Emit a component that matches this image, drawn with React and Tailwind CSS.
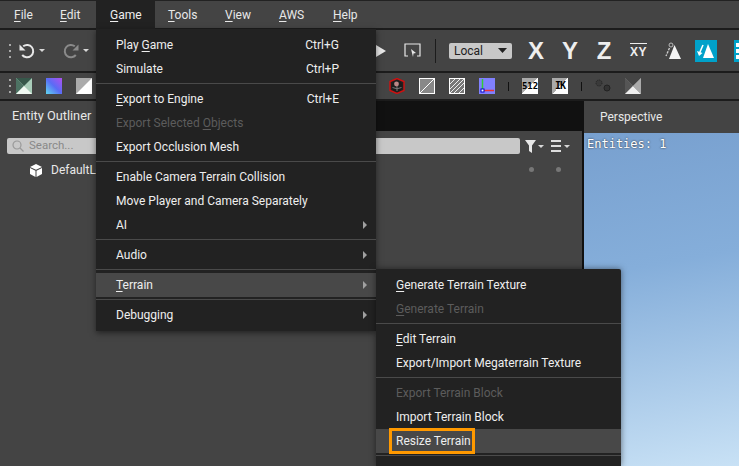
import React from "react";

const font = { fontFamily: 'Roboto, "Open Sans", sans-serif' };

function U({ children }) {
  return <span className="underline decoration-1 underline-offset-2">{children}</span>;
}

function Sep() {
  return <div className="h-px bg-[#4a4a4a] mt-[2px] mb-[3px]" />;
}

function Chevron() {
  return <svg width="4" height="8" viewBox="0 0 4 8" className="absolute right-[9px] top-[8px]"><path d="M0 0 L4 4 L0 8 Z" fill="#a0a0a0" /></svg>;
}

function Item({ children, shortcut, arrow, disabled, active, outlined }) {
  return (
    <div className={`relative h-6 flex items-center pl-5 pr-[37px] justify-between whitespace-nowrap text-[12px] ${active ? "bg-[#484848]" : ""} ${disabled ? "text-[#5c5c5c]" : "text-[#eeeeee]"}`}>
      <span>{children}</span>
      {shortcut && <span className="text-[12px]">{shortcut}</span>}
      {arrow && <Chevron />}
      {outlined && <div className="absolute left-[13px] top-[-1px] w-[86px] h-[26px] border-[3px] border-[#f90]" />}
    </div>
  );
}

function Caret({ className = "" }) {
  return <svg width="6" height="3" viewBox="0 0 6 3" className={className}><path d="M0 0 H6 L3 3 Z" fill="#d8d8d8" /></svg>;
}

function Grip() {
  return <div className="flex flex-col gap-[4px] w-[2px]"><i className="w-[2px] h-[2px] bg-[#aaa]" /><i className="w-[2px] h-[2px] bg-[#aaa]" /><i className="w-[2px] h-[2px] bg-[#aaa]" /></div>;
}

function Undo({ color, flip }) {
  return (
    <svg width="18" height="16" viewBox="0 0 18 16" fill="none" style={flip ? { transform: "scaleX(-1)" } : undefined}>
      <path d="M5.2 3.2 A6.2 6.2 0 1 1 4.2 12" stroke={color} strokeWidth="2" />
      <path d="M1.5 1.5 V7.5 H7.5 Z" fill={color} />
    </svg>
  );
}

function Icon16({ children, className = "" }) {
  return <svg width="16" height="16" viewBox="0 0 16 16" className={`shrink-0 ${className}`}>{children}</svg>;
}

export default function App() {
  return (
    <div style={font} className="relative w-[739px] h-[466px] overflow-hidden bg-[#444444] flex flex-col">
      {/* Menu bar */}
      <div className="h-[30px] shrink-0 border-t border-[#222] border-b-2 border-b-[#1c1c1c] bg-[#444444] flex items-center text-[12px] text-[#e8e8e8] pl-[14px] whitespace-nowrap">
        <span className="w-[46px]"><U>F</U>ile</span>
        <span className="w-[36px]"><U>E</U>dit</span>
        <span className="w-[59px] h-[29px] pl-[14px] pt-[1px] flex items-center bg-[#222222] text-[#eee]"><span><U>G</U>ame</span></span>
        <span className="w-[57px] ml-[13px]"><U>T</U>ools</span>
        <span className="w-[54px]"><U>V</U>iew</span>
        <span className="w-[54px]"><U>A</U>WS</span>
        <span><U>H</U>elp</span>
      </div>

      {/* Toolbar 1 */}
      <div className="h-[43px] shrink-0 border-b-2 border-b-[#1c1c1c] flex items-center *:shrink-0">
        <div className="ml-[9px] mr-[7px]"><Grip /></div>
        <Undo color="#e8e8e8" />
        <Caret className="ml-[3px] mr-[17px]" />
        <Undo color="#8a8a8a" flip />
        <Caret className="ml-[3px]" />
        <svg width="10" height="12" viewBox="0 0 10 12" className="ml-[287px]"><path d="M0 0 L10 6 L0 12 Z" fill="#e8e8e8" /></svg>
        <svg width="17" height="15" viewBox="0 0 17 15" fill="none" className="ml-[18px]">
          <path d="M4 13 H1 V1 H16 V13 H13" stroke="#e8e8e8" strokeWidth="1.2" />
          <path d="M7 6 L12 10 L9.5 10.5 L9 14 Z" fill="#e8e8e8" />
        </svg>
        <div className="w-px h-6 bg-[#1c1c1c] ml-[14px]" />
        <div className="ml-[13px] w-[63px] h-4 rounded-[2px] bg-[#c8c8c8] flex items-center justify-between pl-[5px] pr-[5px] text-[12px] text-[#222]">
          Local
          <svg width="9" height="5" viewBox="0 0 9 5"><path d="M0 0 H9 L4.5 5 Z" fill="#222" /></svg>
        </div>
        <div style={{ fontFamily: '"Liberation Sans", sans-serif' }} className="flex items-center text-[#eeeeee] font-bold text-[24px] leading-none *:shrink-0">
          <span className="w-[16px] text-center ml-[16px]">X</span>
          <span className="w-[16px] text-center ml-[18px]">Y</span>
          <span className="w-[16px] text-center ml-[18px]">Z</span>
          <span className="ml-[18px] w-[17px] border-t border-[#eee] text-[12px] font-bold text-center pt-[2px] tracking-[0.5px]">XY</span>
        </div>
        <svg width="17" height="18" viewBox="0 0 17 18" className="ml-[17px]">
          <path d="M10.5 3 L17 17 H5 Z" fill="#f4f4f4" />
          <circle cx="7" cy="3" r="2" fill="none" stroke="#bbb" />
          <path d="M5.5 6 L2 14" stroke="#ccc" strokeWidth="1.4" strokeDasharray="2.5 1" />
        </svg>
        <div className="ml-[14px] w-[22px] h-[22px] bg-[#00a1c9] flex items-center justify-center">
          <svg width="20" height="18" viewBox="0 0 20 18"><path d="M12 2 L18 16 H7 Z" fill="#fff" /><path d="M7 3 L3.5 11" stroke="#fff" strokeWidth="1.6" fill="none" /><path d="M1 9 L3 14 L6.5 11 Z" fill="#fff" /></svg>
        </div>
        <div className="ml-[17px] w-[22px] h-[22px] bg-[#00a1c9] flex flex-col justify-center gap-[2px] pl-[2px]">
          <i className="w-[4px] h-[4px] bg-white" /><i className="w-[4px] h-[4px] bg-white" /><i className="w-[4px] h-[4px] bg-white" />
        </div>
      </div>

      {/* Toolbar 2 */}
      <div className="h-[28px] shrink-0 border-b-2 border-b-[#1c1c1c] flex items-center *:shrink-0">
        <div className="ml-[9px] mr-[5px]"><Grip /></div>
        <Icon16>
          <rect width="16" height="16" fill="#a9cdb9" />
          <path d="M0 0 L8 8 L16 0 Z" fill="#36574a" />
          <path d="M0 0 L8 8 L0 16 Z" fill="#4d7263" />
          <path d="M0 16 L8 8 L16 16 Z" fill="#f0f8f2" />
        </Icon16>
        <svg width="16" height="16" className="ml-[14px]">
          <defs><linearGradient id="g1" x1="0" y1="1" x2="1" y2="0"><stop offset="0" stopColor="#5fd8f0" /><stop offset="0.5" stopColor="#5a6cf5" /><stop offset="1" stopColor="#b050f0" /></linearGradient></defs>
          <rect width="16" height="16" fill="url(#g1)" />
        </svg>
        <Icon16 className="ml-[14px]">
          <rect width="16" height="16" fill="#ababab" /><path d="M16 0 V16 H0 Z" fill="#fff" />
        </Icon16>
        <Icon16 className="ml-[297px]">
          <path d="M8 0.5 L15 3.5 V12.5 L8 15.5 L1 12.5 V3.5 Z" fill="#222" stroke="#d01010" strokeWidth="1.4" />
          <circle cx="8" cy="8" r="5.5" fill="#1c1c1c" />
          <circle cx="7.5" cy="6" r="2.4" fill="#b88" />
          <path d="M3.5 9.5 Q8 12 12.5 9.5 M8 8 V13" stroke="#777" fill="none" />
        </Icon16>
        <Icon16 className="ml-[14px]">
          <rect x="0.5" y="0.5" width="15" height="15" fill="#888" stroke="#fff" />
          <path d="M1 15 L15 1" stroke="#fff" />
        </Icon16>
        <Icon16 className="ml-[14px]">
          <rect x="0.5" y="0.5" width="15" height="15" fill="#777" stroke="#fff" />
          <path d="M1 6 L6 1 M1 11 L11 1 M1 15 L15 1 M5 15 L15 5 M10 15 L15 10" stroke="#eee" />
        </Icon16>
        <Icon16 className="ml-[14px]">
          <rect width="16" height="16" fill="#8080ff" />
          <path d="M3.5 1 V12" stroke="#3c3" strokeWidth="1.5" />
          <path d="M5 12.5 H15" stroke="#e33" strokeWidth="1.5" />
          <rect x="2" y="11" width="3" height="3" fill="#fff" stroke="#00c" />
        </Icon16>
        <div className="w-px h-[9px] bg-[#111] ml-[13px]" />
        <div className="ml-[13px] w-4 h-4 flex items-center justify-center text-[9px] font-bold leading-none text-black bg-[linear-gradient(135deg,#aaaaaa_50%,#ffffff_50%)] overflow-hidden" style={{ fontFamily: '"DejaVu Sans Mono", monospace' }}>
          <span>512</span>
        </div>
        <div className="ml-[14px] w-4 h-4 flex items-center justify-center text-[10px] font-bold leading-none text-black bg-[linear-gradient(135deg,#aaaaaa_50%,#ffffff_50%)]" style={{ fontFamily: '"DejaVu Sans Mono", monospace' }}>
          <span className="tracking-[-1px]">IK</span>
        </div>
        <div className="w-px h-[9px] bg-[#111] ml-[13px]" />
        <Icon16 className="ml-[13px]">
          <circle cx="4" cy="5" r="3" fill="#3a3a3a" stroke="#222" strokeDasharray="1 1" />
          <circle cx="12" cy="10" r="3" fill="#333" stroke="#222" />
        </Icon16>
        <Icon16 className="ml-[14px]">
          <rect width="16" height="16" fill="#888" />
          <path d="M0 0 H16 L8 8 Z" fill="#444" />
          <path d="M0 0 L8 8 L0 16 Z" fill="#555" />
          <path d="M0 16 H16 L8 8 Z" fill="#eee" />
          <path d="M16 0 V16 L8 8 Z" fill="#aaa" />
        </Icon16>
      </div>

      {/* Body */}
      <div className="flex-1 flex min-h-0 bg-[#111]">
        <div className="w-[582px] shrink-0 flex flex-col">
          <div className="h-[30px] shrink-0 bg-[#111] flex">
            <div className="w-[97px] bg-[#444] text-[12.75px] text-[#e8e8e8] pl-3 flex items-center">Entity Outliner</div>
          </div>
          <div className="flex-1 bg-[#444] flex flex-col">
            <div className="flex items-center h-4 mt-[7px] ml-[7px]">
              <div className="w-[513px] h-4 rounded-[2px] bg-[#c8c8c8] flex items-center pl-[5px] gap-[5px] text-[11.5px] text-[#888]">
                <svg width="12" height="12" viewBox="0 0 12 12" fill="none" stroke="#999" strokeWidth="1.2"><circle cx="5" cy="5" r="4" /><path d="M8 8 L11.5 11.5" /></svg>
                Search...
              </div>
              <svg width="11" height="13" viewBox="0 0 11 13" className="ml-[5px]"><path d="M0 0 H11 L7 5.5 V13 L4 11 V5.5 Z" fill="#e8e8e8" /></svg>
              <Caret className="ml-[2px]" />
              <div className="ml-[7px] flex flex-col gap-[3px] w-[10px]"><i className="h-[2px] bg-[#ddd]" /><i className="h-[2px] bg-[#ddd]" /><i className="h-[2px] bg-[#ddd]" /></div>
              <Caret className="ml-[3px]" />
            </div>
            <div className="flex items-center h-4 mt-[8px] text-[12px] text-[#e8e8e8] relative">
              <svg width="12" height="13" viewBox="0 0 12 13" className="ml-[30px]"><path d="M6 0 L12 3 L6 5.8 L0 3 Z" fill="#fff" /><path d="M0 4 L5.5 6.7 V13 L0 10 Z M12 4 L6.5 6.7 V13 L12 10 Z" fill="#fff" /></svg>
              <span className="ml-[9px]">DefaultLevel</span>
              <i className="absolute left-[529px] top-[5px] w-[5px] h-[5px] rounded-full bg-[#777]" />
              <i className="absolute left-[556px] top-[5px] w-[5px] h-[5px] rounded-full bg-[#777]" />
            </div>
          </div>
        </div>
        <div className="ml-[2px] flex-1 flex flex-col">
          <div className="h-8 shrink-0 bg-[#444] text-[12px] text-[#e8e8e8] pl-4 flex items-center">Perspective</div>
          <div className="flex-1 bg-[linear-gradient(170deg,#78a0cf_0%,#85aeda_40%,#c8e1f5_100%)] pl-[3px] pt-[3px]">
            <span className="text-[12px] leading-[16px] text-white [text-shadow:0_0_2px_#222] block" style={{ fontFamily: '"DejaVu Sans Mono", monospace' }}>Entities: 1</span>
          </div>
        </div>
      </div>

      {/* Game menu */}
      <div className="absolute left-[96px] top-[29px] w-[280px] bg-[#222222] shadow-[0_2px_6px_rgba(0,0,0,0.5)] pt-[4px] pb-[4px]">
        <Item shortcut="Ctrl+G">Play <U>G</U>ame</Item>
        <Item shortcut="Ctrl+P">Simulate</Item>
        <Sep />
        <Item shortcut="Ctrl+E"><U>E</U>xport to Engine</Item>
        <Item disabled>Export Selected <U>O</U>bjects</Item>
        <Item>Export Occlusion Mesh</Item>
        <Sep />
        <Item>Enable Camera Terrain Collision</Item>
        <Item>Move Player and Camera Separately</Item>
        <Item arrow>AI</Item>
        <Sep />
        <Item arrow>Audio</Item>
        <Sep />
        <Item arrow active><U>T</U>errain</Item>
        <Sep />
        <Item arrow>Debugging</Item>
      </div>

      {/* Terrain submenu */}
      <div className="absolute left-[376px] top-[269px] w-[245px] h-[197px] bg-[#222222] shadow-[0_0_6px_rgba(0,0,0,0.5)] pt-[4px] rounded-tr-[2px]">
        <Item><U>G</U>enerate Terrain Texture</Item>
        <Item disabled><U>G</U>enerate Terrain</Item>
        <Sep />
        <Item><U>E</U>dit Terrain</Item>
        <Item>Export/Import Megaterrain Texture</Item>
        <Sep />
        <Item disabled>Export Terrain Block</Item>
        <Item>Import Terrain Block</Item>
        <Item active outlined>Resize Terrain</Item>
        <Sep />
      </div>
    </div>
  );
}
